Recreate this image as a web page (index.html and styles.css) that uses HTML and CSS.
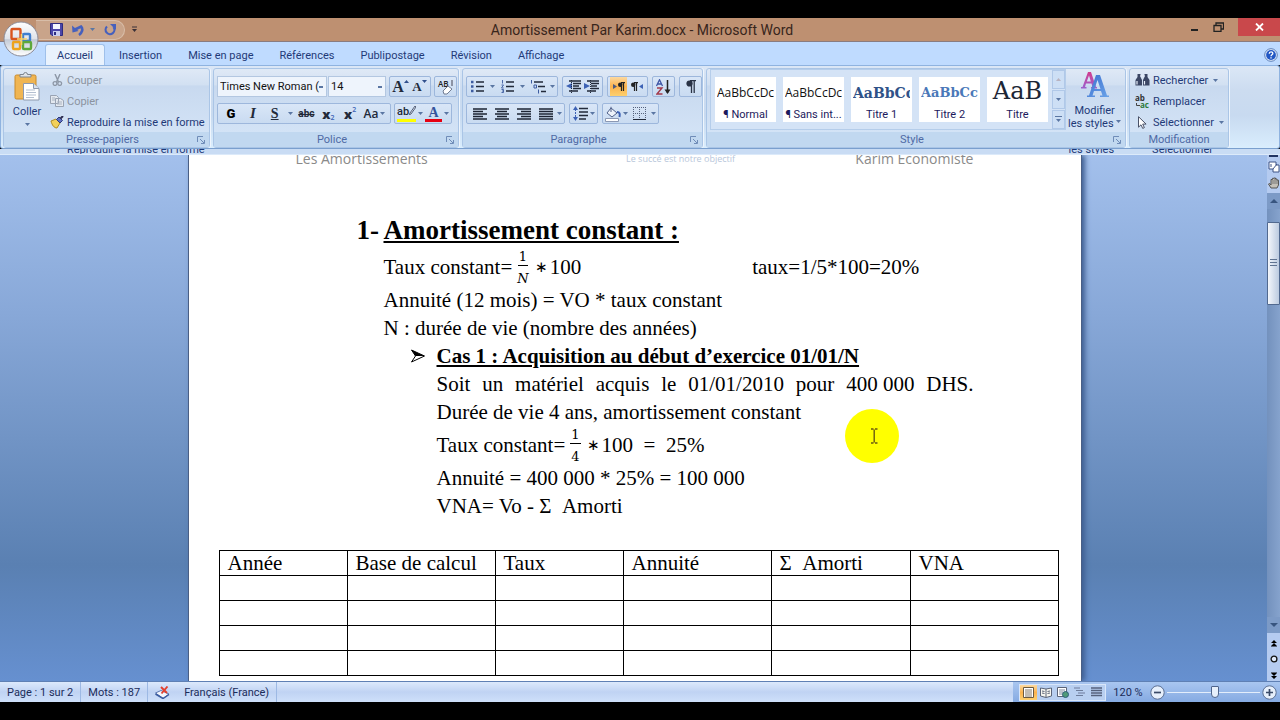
FILE: index.html
```html
<!DOCTYPE html>
<html lang="fr">
<head>
<meta charset="utf-8">
<meta name="viewport" content="width=device-width, initial-scale=1">
<title>Amortissement Par Karim.docx - Microsoft Word</title>
<link rel="stylesheet" href="styles.css">
</head>
<body>
<svg class="defs" aria-hidden="true">
  <defs>
    <linearGradient id="g-orb" x1="0" y1="0" x2="0" y2="1"><stop offset="0" stop-color="#fff"/><stop offset=".5" stop-color="#dfe3ea"/><stop offset=".52" stop-color="#c3cad6"/><stop offset="1" stop-color="#fff"/></linearGradient>
    <linearGradient id="g-pink" x1="0" y1="0" x2="0" y2="1"><stop offset="0" stop-color="#d23b8d"/><stop offset="1" stop-color="#9a62d0"/></linearGradient>
    <linearGradient id="g-blue" x1="0" y1="0" x2="1" y2="1"><stop offset="0" stop-color="#3c6fd0"/><stop offset="1" stop-color="#6aa3e8"/></linearGradient>
    <symbol id="caret" viewBox="0 0 5 3"><path d="M0 0h5L2.500 3z" fill="#5a76a3"/></symbol>
    <symbol id="launch" viewBox="0 0 8 8"><path d="M.5 6V.5H6M4 7.500H7.500V4M3 3l4 4" fill="none" stroke="#6f8cb8"/></symbol>
    <symbol id="lines-l" viewBox="0 0 14 12"><path d="M0 1h14M0 3.500h10M0 6h14M0 8.500h10M0 11h14" stroke="#1d2433" stroke-width="1.400"/></symbol>
    <symbol id="lines-c" viewBox="0 0 14 12"><path d="M0 1h14M2 3.500h10M0 6h14M2 8.500h10M0 11h14" stroke="#1d2433" stroke-width="1.400"/></symbol>
    <symbol id="lines-r" viewBox="0 0 14 12"><path d="M0 1h14M4 3.500h10M0 6h14M4 8.500h10M0 11h14" stroke="#1d2433" stroke-width="1.400"/></symbol>
    <symbol id="lines-j" viewBox="0 0 14 12"><path d="M0 1h14M0 3.500h14M0 6h14M0 8.500h14M0 11h14" stroke="#1d2433" stroke-width="1.400"/></symbol>
  </defs>
</svg>

<div class="app">
  <header class="titlebar">
    <div class="quick">
      <button class="plain" aria-label="Enregistrer"><svg width="13" height="13" viewBox="0 0 13 13"><path d="M.5.5h12v12H2L.5 11z" fill="#4b45a8" stroke="#2e2b80"/><path d="M3 1h7v5H3z" fill="#f3f6ff"/><path d="M3 8h7v5H3z" fill="#c9cdf0"/><path d="M4 9h2v3H4z" fill="#2e2b80"/></svg></button>
      <button class="plain undo" aria-label="Annuler"><svg width="12" height="12" viewBox="0 0 12 12"><path d="M3 5.500L9 2.500C11.500 5 10 9 7 11" fill="none" stroke="#4660bd" stroke-width="2.600"/><path d="M0 1.500L.5 8.500 6.500 7z" fill="#4660bd"/></svg><svg class="car" width="5" height="3"><use href="#caret"/></svg></button>
      <button class="plain" aria-label="Répéter"><svg width="12" height="12" viewBox="0 0 12 12"><path d="M3 2.500A4.400 4.400 0 1 0 9.500 3" fill="none" stroke="#4660bd" stroke-width="2.200"/><path d="M6 0h6v6z" fill="#4660bd"/></svg></button>
    </div>
    <button class="plain quick-more" aria-label="Personnaliser la barre d'outils Accès rapide"><svg width="7" height="7" viewBox="0 0 7 7"><path d="M1 1h5" stroke="#3a3038"/><path d="M1 3h5L3.500 6z" fill="#3a3038"/></svg></button>
    <h1 class="caption">Amortissement Par Karim.docx - Microsoft Word</h1>
    <div class="winbtns">
      <button class="plain" aria-label="Réduire"><svg width="9" height="9" viewBox="0 0 9 9"><path d="M1 7h7" stroke="#222" stroke-width="2"/></svg></button>
      <button class="plain" aria-label="Restaurer"><svg width="11" height="10" viewBox="0 0 11 10"><path d="M1 3.500h7v6H1zM3 3V1h7.500v6H8" fill="none" stroke="#222" stroke-width="1.300"/></svg></button>
      <button class="plain close" aria-label="Fermer"><svg width="9" height="8" viewBox="0 0 9 8"><path d="M1 .5l7 7M8 .5l-7 7" stroke="#fff" stroke-width="1.800"/></svg></button>
    </div>
    <button class="orb" aria-label="Bouton Office"><svg width="36" height="36" viewBox="0 0 36 36"><circle cx="18" cy="18" r="17" fill="url(#g-orb)" stroke="#8c8c98"/><g fill="none" stroke-width="2.400"><rect x="8.500" y="8" width="9" height="10" rx="1" stroke="#d9541e"/><rect x="20" y="13" width="7" height="7" rx="1" stroke="#3f7fd0"/><rect x="10" y="21" width="7" height="7" rx="1" stroke="#eda31b"/><rect x="20" y="21" width="8" height="7" rx="1" stroke="#5fa83a"/></g><path d="M14 18h10M18.500 13v11" stroke="#f7d36a" stroke-width="1.600"/></svg></button>
  </header>

  <nav class="tabs" aria-label="Ruban">
    <button class="tab on">Accueil</button><button class="tab">Insertion</button><button class="tab">Mise en page</button><button class="tab">Références</button><button class="tab">Publipostage</button><button class="tab">Révision</button><button class="tab">Affichage</button>
    <button class="plain help" aria-label="Aide"><svg width="14" height="14" viewBox="0 0 14 14"><circle cx="7" cy="7" r="6.300" fill="#e9f1fd" stroke="#5c7fb8"/><circle cx="7" cy="7" r="4.900" fill="#2257c4"/><path d="M5.200 5.800C5.200 3.300 9 3.400 8.800 5.600 8.700 6.800 7 6.900 7 8.200M7 9.200v1.300" fill="none" stroke="#fff" stroke-width="1.300"/></svg></button>
  </nav>

  <div class="ribbon">
    <section class="group g-clip">
      <div class="body clip">
        <button class="big paste"><svg width="26" height="29" viewBox="0 0 26 29"><rect x="1" y="3" width="21" height="24" rx="1.500" fill="#f0b552" stroke="#c98a2b"/><path d="M6 5V2.500h3.500a2 2 0 0 1 4 0H17V5z" fill="#dfe3e8" stroke="#7d8590"/><path d="M9.500 11.500h10l5.500 5v11.500H9.500z" fill="#fff" stroke="#8e99ad"/><path d="M19.500 11.500v5H25" fill="#d9e2ef" stroke="#8e99ad"/><path d="M12 18h9M12 20.500h10M12 23h10M12 25.500h8" stroke="#b4bfd0"/></svg><span>Coller</span><svg class="car" width="5" height="3"><use href="#caret"/></svg></button>
        <div class="stack">
          <button class="cmd off"><svg width="14" height="12" viewBox="0 0 14 12"><path d="M5 0l3.500 8M10 0L6.500 8" stroke="#8d97a6" stroke-width="1.400"/><circle cx="5" cy="9.500" r="1.900" fill="none" stroke="#8d97a6" stroke-width="1.300"/><circle cx="9.700" cy="9.500" r="1.900" fill="none" stroke="#8d97a6" stroke-width="1.300"/></svg>Couper</button>
          <button class="cmd off"><svg width="14" height="12" viewBox="0 0 14 12"><path d="M.5.5h6l2 2v6h-8zM5.500 3.500h5l3 2v6h-8z" fill="#e3e8ef" stroke="#99a3b3"/><path d="M7 7h5M7 9h5M2 3h3M2 5h3" stroke="#aab3c1"/></svg>Copier</button>
          <button class="cmd"><svg width="14" height="13" viewBox="0 0 14 13"><path d="M1 5l5-2 4 4-3 5C4 12 2 9 1 5z" fill="#f2d05a" stroke="#b08c22"/><path d="M6.500 3.500L9 1l3.500 3.500L10 7z" fill="#5e6fc0" stroke="#2d3a78"/><path d="M10.500 2.500L13 0" stroke="#2d2d50" stroke-width="2"/></svg>Reproduire la mise en forme</button>
        </div>
      </div>
      <footer><span>Presse-papiers</span><button class="plain" aria-label="Options Presse-papiers"><svg width="8" height="8"><use href="#launch"/></svg></button></footer>
    </section>

    <section class="group g-font">
      <div class="body rows">
        <div class="row">
          <div class="fields">
            <select class="field f-name" aria-label="Police"><option>Times New Roman (</option></select><select class="field f-size" aria-label="Taille de police"><option>14</option></select>
          </div>
          <div class="seg"><button class="tb serif big-a" aria-label="Agrandir la police">A<svg width="5" height="4" viewBox="0 0 5 4"><path d="M0 3L2.500 0 5 3z" fill="#31508c"/></svg></button><button class="tb serif small-a" aria-label="Réduire la police">A<svg width="5" height="4" viewBox="0 0 5 4"><path d="M0 0h5L2.500 3z" fill="#31508c"/></svg></button></div>
          <div class="seg"><button class="tb" aria-label="Effacer la mise en forme"><svg width="17" height="16" viewBox="0 0 17 16"><text x="1" y="8" font-size="8" font-weight="600" font-family="Open Sans, sans-serif" fill="#222">AB</text><path d="M6 12l5-5 4 3-5 5H7z" fill="#fff" stroke="#6f7b92"/><path d="M15 1v6" stroke="#445"/></svg></button></div>
        </div>
        <div class="row">
          <div class="seg grow">
            <button class="tb gras">G</button><button class="tb serif ital">I</button><button class="tb serif und">S</button><svg class="car" width="5" height="3"><use href="#caret"/></svg><button class="tb barre">abc</button><button class="tb ind">x<sub>2</sub></button><button class="tb ind">x<sup>2</sup></button><button class="tb casse">Aa<svg class="car" width="5" height="3"><use href="#caret"/></svg></button>
          </div>
          <div class="seg">
            <button class="tb color" aria-label="Surlignage"><span class="hl">ab</span><svg class="pen" width="7" height="9" viewBox="0 0 7 9"><path d="M6 0L1 7l-1 2 2-1 5-7z" fill="#dfe4ee" stroke="#55617a"/></svg></button><svg class="car" width="5" height="3"><use href="#caret"/></svg>
            <button class="tb color red" aria-label="Couleur de police"><span class="fc">A</span></button><svg class="car" width="5" height="3"><use href="#caret"/></svg>
          </div>
        </div>
      </div>
      <footer><span>Police</span><button class="plain" aria-label="Options Police"><svg width="8" height="8"><use href="#launch"/></svg></button></footer>
    </section>

    <section class="group g-para">
      <div class="body rows">
        <div class="row">
          <div class="seg wide">
            <button class="tb" aria-label="Puces"><svg width="13" height="13" viewBox="0 0 13 13"><path d="M5 2h8M5 6.500h8M5 11h8" stroke="#222a3a" stroke-width="1.300"/><path d="M0 .8h2.500v2.500H0zM0 5.300h2.500v2.500H0zM0 9.800h2.500v2.500H0z" fill="#3c5ba0"/></svg></button><svg class="car" width="5" height="3"><use href="#caret"/></svg>
            <button class="tb" aria-label="Numérotation"><svg width="13" height="13" viewBox="0 0 13 13"><path d="M5 2h8M5 6.500h8M5 11h8" stroke="#222a3a" stroke-width="1.300"/><path d="M1.500 0v3.500M.5 5h2L.5 8h2.200M.5 9.500h2v3H.5M1 11h1" fill="none" stroke="#3c5ba0" stroke-width=".9"/></svg></button><svg class="car" width="5" height="3"><use href="#caret"/></svg>
            <button class="tb" aria-label="Liste à plusieurs niveaux"><svg width="16" height="14" viewBox="0 0 16 14"><path d="M4 2h9M8 6.500h7M11 11.500h5" stroke="#222a3a" stroke-width="1.300"/><path d="M1.500 0v3.500M4 5h2.500v3H4zM8.500 9.500v4" fill="none" stroke="#3c5ba0"/></svg></button><svg class="car" width="5" height="3"><use href="#caret"/></svg>
          </div>
          <div class="seg">
            <button class="tb" aria-label="Diminuer le retrait"><svg width="15" height="13" viewBox="0 0 15 13"><path d="M3 1h12M7 3.500h8M7 6h6M7 8.500h8M3 11h9" stroke="#222a3a" stroke-width="1.500"/><path d="M6 3v6L0 6z" fill="#3d62b5"/><path d="M5.500 0v13" stroke="#222a3a" stroke-dasharray="1 1"/></svg></button>
            <button class="tb" aria-label="Augmenter le retrait"><svg width="15" height="13" viewBox="0 0 15 13"><path d="M3 1h12M7 3.500h8M7 6h6M7 8.500h8M3 11h9" stroke="#222a3a" stroke-width="1.500"/><path d="M0 3v6l6-3z" fill="#3d62b5"/><path d="M6.500 0v13" stroke="#222a3a" stroke-dasharray="1 1"/></svg></button>
          </div>
          <div class="seg">
            <button class="tb hot" aria-label="De gauche à droite"><svg width="12" height="9" viewBox="0 0 12 9"><path d="M0 2v5l4-2.500z" fill="#4d5b80"/><path d="M8 .7h4M8.500 1v8M10.500 1v8" stroke="#222" stroke-width="1.200"/><circle cx="7.200" cy="2.800" r="2.200" fill="#222"/></svg></button>
            <button class="tb" aria-label="De droite à gauche"><svg width="12" height="9" viewBox="0 0 12 9"><path d="M12 2v5L8 4.500z" fill="#3d62b5"/><path d="M3 .7h4M3.500 1v8M5.500 1v8" stroke="#222" stroke-width="1.200"/><circle cx="2.200" cy="2.800" r="2.200" fill="#222"/></svg></button>
          </div>
          <div class="seg"><button class="tb" aria-label="Trier"><svg width="15" height="16" viewBox="0 0 15 16"><path d="M.5 7L3.500.8 6.500 7M1.700 5h3.600" fill="none" stroke="#3d55a5" stroke-width="1.300"/><path d="M1 9h5L1 15h5.500" fill="none" stroke="#a33a4c" stroke-width="1.400"/><path d="M11.500 1v13" stroke="#222" stroke-width="1.500"/><path d="M8.500 10.500h6l-3 4.500z" fill="#222"/></svg></button></div>
          <div class="seg"><button class="tb" aria-label="Afficher tout"><svg width="10" height="13" viewBox="0 0 10 13"><path d="M4 .7h6M5.500 1v12M8.200 1v12" stroke="#2a3346" stroke-width="1.300"/><circle cx="3.500" cy="3.500" r="3.100" fill="#2a3346"/></svg></button></div>
        </div>
        <div class="row">
          <div class="seg">
            <button class="tb w22" aria-label="Aligner à gauche"><svg width="14" height="12"><use href="#lines-l"/></svg></button><button class="tb w22" aria-label="Centrer"><svg width="14" height="12"><use href="#lines-c"/></svg></button><button class="tb w22" aria-label="Aligner à droite"><svg width="14" height="12"><use href="#lines-r"/></svg></button><button class="tb w22" aria-label="Justifier"><svg width="14" height="12"><use href="#lines-j"/></svg></button><svg class="car" width="5" height="3"><use href="#caret"/></svg>
          </div>
          <div class="seg"><button class="tb" aria-label="Interligne"><svg width="15" height="15" viewBox="0 0 15 15"><path d="M6 2.500h9M6 6h9M6 9.500h9M6 13h7" stroke="#222a3a" stroke-width="1.300"/><path d="M2.500 0L5 4H0zM2.500 15L5 11H0z" fill="#3d62b5"/><path d="M2.500 3v9" stroke="#3d62b5" stroke-dasharray="2 1"/></svg></button><svg class="car" width="5" height="3"><use href="#caret"/></svg></div>
          <div class="seg">
            <button class="tb" aria-label="Trame de fond"><svg width="17" height="16" viewBox="0 0 17 16"><path d="M6 2l6 5-5 4-5-4z" fill="#eef3fb" stroke="#50608a"/><path d="M6 6V.8" stroke="#50608a"/><path d="M12 6c3 0 3 2 2.500 5" fill="none" stroke="#3d62b5" stroke-width="2"/><path d="M.5 12.500h13v3H.5z" fill="#fff" stroke="#8b98b3"/></svg></button><svg class="car" width="5" height="3"><use href="#caret"/></svg>
            <button class="tb w22" aria-label="Bordures"><svg width="13" height="13" viewBox="0 0 13 13"><path d="M.5 0v12M6.500 0v12M12.500 0v12M0 .5h13M0 6.500h13" stroke="#55617c" stroke-dasharray="1 1"/><path d="M0 12.500h13" stroke="#222a3a"/></svg></button><svg class="car" width="5" height="3"><use href="#caret"/></svg>
          </div>
        </div>
      </div>
      <footer><span>Paragraphe</span><button class="plain" aria-label="Options Paragraphe"><svg width="8" height="8"><use href="#launch"/></svg></button></footer>
    </section>

    <section class="group g-style">
      <div class="body styles">
        <div class="gallery">
          <button class="sty"><span class="smp">AaBbCcDc</span><span>¶ Normal</span></button>
          <button class="sty"><span class="smp">AaBbCcDc</span><span>¶ Sans int...</span></button>
          <button class="sty"><span class="smp t1">AaBbCc</span><span>Titre 1</span></button>
          <button class="sty"><span class="smp t2">AaBbCc</span><span>Titre 2</span></button>
          <button class="sty"><span class="smp t0">AaB</span><span>Titre</span></button>
          <div class="gscroll">
            <button aria-label="Ligne précédente"><svg width="5" height="3" viewBox="0 0 5 3"><path d="M0 3h5L2.500 0z" fill="#b9b3c0"/></svg></button>
            <button aria-label="Ligne suivante"><svg width="5" height="3"><use href="#caret"/></svg></button>
            <button aria-label="Autres"><svg width="7" height="7" viewBox="0 0 7 7"><path d="M0 .5h7" stroke="#5a76a3"/><path d="M1 3h5L3.500 6z" fill="#5a76a3"/></svg></button>
          </div>
        </div>
        <button class="big modif"><svg width="28" height="27" viewBox="0 0 28 27"><path d="M7 1h3l5 15h1v1.500h-6V16h1.500l-1-3.500H5L4 16h1.500v1.500H0V16h1.500zM8 4.500L5.800 10.500h4z" fill="url(#g-pink)"/><path d="M15 4h4l7 20.500h2V26h-9v-1.500h2.500L20 20h-7l-1.500 4.500H14V26H6v-1.500h2zM16.500 9l-3 9h6z" fill="url(#g-blue)"/></svg><span>Modifier</span><span>les styles <svg class="car" width="5" height="3"><use href="#caret"/></svg></span></button>
      </div>
      <footer><span>Style</span><button class="plain" aria-label="Options Style"><svg width="8" height="8"><use href="#launch"/></svg></button></footer>
    </section>

    <section class="group g-edit">
      <div class="body">
        <div class="stack">
          <button class="cmd"><svg width="15" height="12" viewBox="0 0 15 12"><path d="M2.500 0h3v3L7 6v5.500H.5V6l2-3zM9.500 0h3v3l2 3v5.500H8V6l1.500-3z" fill="#3b4664"/><path d="M2 7v3.500M9.500 7v3.500M5 2h5" stroke="#e8eefa" stroke-width="1.200"/></svg>Rechercher<svg class="car" width="5" height="3"><use href="#caret"/></svg></button>
          <button class="cmd"><svg width="15" height="15" viewBox="0 0 15 15"><text x="0" y="7" font-size="8" font-weight="700" font-family="Open Sans, sans-serif" fill="#333">ab</text><text x="5" y="14" font-size="8" font-weight="700" font-family="Open Sans, sans-serif" fill="#2d7a3c">ac</text><path d="M1.500 9v2.500H5" fill="none" stroke="#444"/></svg>Remplacer</button>
          <button class="cmd"><svg width="15" height="13" viewBox="0 0 15 13"><path d="M3.500.7v10.500l2.500-2.400 1.700 3.600 1.700-.8-1.700-3.500h3.400z" fill="#fff" stroke="#4a5268"/></svg>Sélectionner<svg class="car" width="5" height="3"><use href="#caret"/></svg></button>
        </div>
      </div>
      <footer><span>Modification</span></footer>
    </section>
  </div>

  <div class="echo" aria-hidden="true"><span class="e1">Reproduire la mise en forme</span><span class="e2">les styles</span><span class="e3">Sélectionner</span></div>

  <div class="work">
    <main class="desk">
      <article class="page">
        <div class="runhead"><span>Les Amortissements</span><small>Le succé est notre objectif</small><span>Karim Economiste</span></div>
        <div class="text">
          <h2><span class="num">1-</span><u>Amortissement constant :</u></h2>
          <p class="math"><span>Taux constant=</span><span class="frac"><span>1</span><i>N</i></span><span class="op">∗</span><span>100</span><span class="aside">taux=1/5*100=20%</span></p>
          <p>Annuité (12 mois) = VO * taux constant</p>
          <p>N : durée de vie (nombre des années)</p>
          <div class="case">
            <h3><svg width="14" height="14" viewBox="0 0 14 14"><path d="M.5 1L13.500 7 .5 13 4.500 7z" fill="#fff" stroke="#000"/><path d="M.5 1L13.500 7H4.500z"/></svg><u>Cas 1 : Acquisition au début d’exercice 01/01/N</u></h3>
            <p class="just">Soit un matériel acquis le 01/01/2010 pour <span class="amount">400 000</span> DHS.</p>
            <p>Durée de vie 4 ans, amortissement constant</p>
            <p class="math"><span>Taux constant=</span><span class="frac"><span>1</span><span>4</span></span><span class="op">∗</span><span>100 &nbsp;=&ensp;25%</span></p>
            <p>Annuité = 400 000 * 25% = 100 000</p>
            <p>VNA= Vo - Σ &nbsp;Amorti</p>
          </div>
        </div>
        <table class="plan">
          <colgroup><col class="c1"><col class="c2"><col class="c1"><col class="c2"><col class="c3"><col class="c2"></colgroup>
          <thead><tr><th>Année</th><th>Base de calcul</th><th>Taux</th><th>Annuité</th><th>Σ &nbsp;Amorti</th><th>VNA</th></tr></thead>
          <tbody>
            <tr><td></td><td></td><td></td><td></td><td></td><td></td></tr>
            <tr><td></td><td></td><td></td><td></td><td></td><td></td></tr>
            <tr><td></td><td></td><td></td><td></td><td></td><td></td></tr>
            <tr><td></td><td></td><td></td><td></td><td></td><td></td></tr>
          </tbody>
        </table>
        <svg class="pointer" width="54" height="54" viewBox="0 0 54 54" aria-hidden="true"><circle cx="27" cy="27" r="27" fill="#ff0"/><path d="M26 20h2.500M30 20h2.500M26 34h2.500M30 34h2.500M29.200 20.500v13" stroke="#6a5a10" stroke-width="1.400"/></svg>
      </article>
    </main>
    <aside class="scroll">
      <svg class="split" width="9" height="2"><path d="M0 1h9" stroke="#223563" stroke-width="2"/></svg>
      <button class="plain" aria-label="Règle"><svg width="12" height="12" viewBox="0 0 12 12"><path d="M1 1h7v3h3v7H5V8H1z" fill="#fff" stroke="#3f5486"/><path d="M5 8l4-5M3 3v3" stroke="#3f5486"/></svg></button>
      <button class="plain" aria-label="Main"><svg width="12" height="12" viewBox="0 0 12 12"><path d="M3 11L.5 7l1.200-.6L3 8V2.500h1.500V1.300H6V1h1.500v1H9v1.200h1.500V8L9 11z" fill="#c4c0b8" stroke="#555"/><path d="M5 3v4M7 2v5M9 3v4" stroke="#777"/></svg></button>
      <button class="arrow up" aria-label="Défiler vers le haut"><svg width="8" height="4" viewBox="0 0 8 4"><path d="M0 4h8L4 0z" fill="#38557f"/></svg></button>
      <div class="track"><div class="thumb"></div></div>
      <button class="arrow down" aria-label="Défiler vers le bas"><svg width="8" height="4" viewBox="0 0 8 4"><path d="M0 0h8L4 4z" fill="#38557f"/></svg></button>
      <button class="plain nav" aria-label="Page précédente"><svg width="6" height="7" viewBox="0 0 6 7"><path d="M0 3h6L3 0zM0 6h6L3 3zM0 6h6v.6H0z"/></svg></button>
      <button class="plain nav" aria-label="Sélectionner l'objet parcouru"><svg width="8" height="8" viewBox="0 0 8 8"><circle cx="4" cy="4" r="2.900" fill="#dfe9fa" stroke="#111" stroke-width="1.300"/></svg></button>
      <button class="plain nav" aria-label="Page suivante"><svg width="6" height="7" viewBox="0 0 6 7"><path d="M0 1h6L3 4zM0 4h6L3 7zM0 .4h6V1H0z"/></svg></button>
    </aside>
  </div>

  <footer class="status">
    <button class="plain st">Page : 1 sur 2</button>
    <button class="plain st">Mots : 187</button>
    <button class="plain st icon" aria-label="Vérification"><svg width="15" height="13" viewBox="0 0 15 13"><path d="M.5 7L6 4.500 14 8l-6 4.500z" fill="#f4f6fc" stroke="#5b77b0"/><path d="M.5 8l7.500 4.500 6-4" fill="none" stroke="#3a5ba0" stroke-width="1.500"/><path d="M6 1l6 6M12.500.5L6.500 7.500" stroke="#e2402e" stroke-width="1.900"/></svg></button>
    <button class="plain st">Français (France)</button>
    <div class="zoombar">
      <div class="views">
        <button class="hot" aria-label="Page"><svg width="11" height="11" viewBox="0 0 11 11"><path d="M.5.5h10v10H.5z" fill="#fff" stroke="#6a5a40"/><path d="M2 3h7M2 5h7M2 7h7M2 9h7" stroke="#857a68"/></svg></button>
        <button aria-label="Lecture plein écran"><svg width="12" height="11" viewBox="0 0 12 11"><path d="M.5 1L6 2l5.500-1v8L6 10.500.5 9z" fill="#f6f6f0" stroke="#5b6478"/><path d="M6 2v8M2 4l2.500.5M2 6l2.500.5M7.500 4.500L10 4M7.500 6.500L10 6" stroke="#5b6478"/></svg></button>
        <button aria-label="Web"><svg width="12" height="11" viewBox="0 0 12 11"><path d="M.5.5h9v9h-9z" fill="#fff" stroke="#5b6478"/><path d="M2 3h6M2 5h4M2 7h3" stroke="#7d879b"/><circle cx="8.500" cy="7.500" r="3" fill="#4f9a78" stroke="#2d5c78"/></svg></button>
        <button aria-label="Plan"><svg width="11" height="10" viewBox="0 0 11 10"><path d="M0 1h6M2 3.500h7M4 6h7M2 8.500h7" stroke="#6e7d9b" stroke-width="1.200"/></svg></button>
        <button aria-label="Brouillon"><svg width="11" height="10" viewBox="0 0 11 10"><path d="M0 1h11M0 3.500h11M0 6h11M0 8.500h11" stroke="#56627c" stroke-width="1.300"/></svg></button>
      </div>
      <button class="plain pct">120 %</button>
      <button class="plain" aria-label="Zoom arrière"><svg width="15" height="15" viewBox="0 0 15 15"><circle cx="7.500" cy="7.500" r="6.700" fill="#e6effb" stroke="#5b6f93"/><path d="M4 7.500h7" stroke="#3a4a68" stroke-width="1.700"/></svg></button>
      <input class="range" type="range" min="10" max="210" value="114" aria-label="Zoom">
      <button class="plain" aria-label="Zoom avant"><svg width="15" height="15" viewBox="0 0 15 15"><circle cx="7.500" cy="7.500" r="6.700" fill="#e6effb" stroke="#5b6f93"/><path d="M4 7.500h7M7.500 4v7" stroke="#3a4a68" stroke-width="1.700"/></svg></button>
    </div>
  </footer>
</div>
</body>
</html>
```
FILE: styles.css
```css
* { box-sizing: border-box; }
body { margin: 0; background: #000; font-family: Roboto, "Open Sans", sans-serif; font-size: 11px; color: #1f3a78; }
button { font: inherit; color: inherit; border: 0; background: none; padding: 0; display: flex; align-items: center; justify-content: center; white-space: nowrap; }
svg { display: block; flex: none; }
.defs { position: absolute; width: 0; height: 0; }
.app { display: flex; flex-direction: column; height: 100vh; padding: 18px 0; }

.titlebar { position: relative; z-index: 2; height: 24px; flex: none; display: grid; grid-template-columns: 125px 1fr auto 1fr 121px; align-items: center; background: #be9071; border-bottom: 1px solid #8a7c80; }
.quick { display: flex; align-items: center; gap: 9px; height: 20px; margin-left: 36px; padding: 0 12px 0 14px; border: 1px solid #d8bda8; border-left: 0; border-radius: 0 10px 10px 0; background: #c9a48a; }
.undo { gap: 6px; }
.quick-more { justify-self: start; margin-left: 6px; }
.caption { margin: 0; font-size: 14px; font-weight: 400; line-height: 18px; color: #38251c; white-space: nowrap; }
.winbtns { grid-column: 4 / 6; display: flex; justify-content: flex-end; align-self: start; gap: 14px; height: 18px; }
.close { width: 42px; background: #c9484b; }
.orb { position: absolute; left: 3px; top: 3px; }

.tabs { display: flex; flex: none; align-items: stretch; gap: 2px; height: 23px; padding: 2px 2px 0 45px; background: #bfdbff; }
.tab { padding: 0 11px; border: 1px solid transparent; border-bottom: 0; }
.tab.on { background: #e9f2fd; border-color: #9fc0ea; border-radius: 3px 3px 0 0; }
.help { margin-left: auto; }

.ribbon { display: flex; flex: none; gap: 3px; height: 84px; padding: 2px 2px 0; overflow: hidden; background: linear-gradient(#dbe7f6, #ccdcf0 30%, #c8daf0 60%, #d9edfd); border: 1px solid #8fb3e0; border-bottom-color: #7a9fce; border-radius: 3px; }
.group { flex: none; display: flex; flex-direction: column; border: 1px solid #aac5e6; border-radius: 3px; background: linear-gradient(#dfe9f6, #d2e0f2 20%, #c8d9ef 22%, #d6e6f8); box-shadow: 1px 0 #eef5fd; }
.g-clip { width: 207px; }
.g-font { width: 246px; }
.g-para { width: 241px; }
.g-style { width: 420px; }
.g-edit { width: 100px; }
.group .body { flex: 1; display: flex; min-height: 0; }
.group footer { display: flex; flex: none; align-items: center; height: 15px; padding: 0 4px; background: #c1d8f0; color: #4f6aa5; }
.group footer span { flex: 1; text-align: center; line-height: 14px; }
.clip { gap: 3px; padding-left: 5px; }
.big { flex-direction: column; justify-content: flex-start; line-height: 13px; }
.paste { width: 36px; padding-top: 3px; gap: 4px; }
.paste span { line-height: 14px; }
.stack { display: flex; flex-direction: column; justify-content: space-between; padding: 2px 2px 1px; }
.g-edit .stack { padding-left: 5px; }
.cmd { justify-content: flex-start; height: 18px; gap: 3px; }
.cmd .car { margin-left: 2px; }
.off { color: #8b93a0; }

.rows { flex-direction: column; gap: 6px; padding: 7px 0 0 3px; }
.row { display: flex; gap: 3px; height: 21px; }
.g-para .row { gap: 4px; }
.g-para .seg { gap: 1px; }
.g-para .seg.wide { gap: 0; width: 92px; padding: 0; }
.fields { display: flex; gap: 1px; }
.field { appearance: none; border: 1px solid #b3c7e1; border-radius: 0; background: #eef4fc linear-gradient(#5a76a3, #5a76a3) no-repeat right 3px center / 4px 2px; color: #111; font: inherit; padding: 0 2px; }
.f-name { width: 110px; }
.f-size { width: 58px; }
.seg { display: flex; align-items: center; justify-content: space-around; gap: 2px; padding: 0 2px; border: 1px solid #9db7dc; border-radius: 2px; background: linear-gradient(#d9e6f7, #c9dbf1); }
.seg.grow { width: 174px; gap: 0; }
.tb { height: 19px; min-width: 17px; color: #222a3a; }
.serif { font-family: "Liberation Serif", serif; font-weight: 700; }
.big-a { font-size: 16px; align-items: center; }
.small-a { font-size: 13px; }
.big-a svg, .small-a svg { align-self: flex-start; margin-top: 3px; }
.gras { font-weight: 900; font-size: 13px; color: #000; }
.ital { font-style: italic; font-size: 15px; }
.und { font-size: 14px; text-decoration: underline; }
.barre { font-weight: 700; font-size: 10px; text-decoration: line-through; }
.ind { font-family: "Open Sans", sans-serif; font-weight: 800; font-size: 13px; }
.ind sub, .ind sup { font-size: 7px; font-weight: 600; color: #3d62b5; line-height: 7px; }
.ind sub { align-self: flex-end; margin-bottom: 2px; }
.ind sup { align-self: flex-start; margin-top: 2px; }
.casse { font-family: "Open Sans", sans-serif; font-weight: 600; font-size: 12px; gap: 2px; }
.color { align-items: flex-start; border-bottom: 3px solid #ff0; height: 16px; }
.color.red { border-color: #e60012; }
.hl { font-size: 11px; font-weight: 500; line-height: 12px; }
.fc { font: 700 14px/13px "Liberation Serif", serif; color: #35549c; }
.w22 { width: 21px; }
.hot { background: linear-gradient(#fcd9a0, #fbb24c 50%, #fdd070); }

.styles { justify-content: space-between; padding: 0 7px 2px 3px; gap: 2px; }
.gallery { display: flex; flex: 1; align-items: center; gap: 7px; padding-left: 4px; border: 1px solid #b5cdea; background: #d4e3f6; }
.sty { width: 61px; height: 45px; flex: none; flex-direction: column; justify-content: flex-end; overflow: hidden; background: #fff; color: #1c1a5c; line-height: 15px; padding: 0 2px; }
.smp { width: 100%; height: 28px; overflow: hidden; font: 12px/28px "Open Sans", sans-serif; color: #111; text-align: left; }
.t1, .t2 { font-family: "DejaVu Serif", serif; font-weight: 700; font-size: 14px; color: #2f5288; }
.t2 { font-size: 13px; color: #4a78b8; }
.t0 { font-family: "DejaVu Serif", serif; font-size: 24px; line-height: 24px; color: #1c2636; text-align: center; }
.gscroll { display: flex; flex-direction: column; align-self: stretch; width: 13px; margin-left: -3px; gap: 1px; }
.gscroll button { flex: 1; background: #cddff5; border: 1px solid #b0c8e8; }
.modif { width: 54px; padding-top: 2px; }
.modif svg:first-child { margin-bottom: 6px; }
.modif .car { display: inline-block; vertical-align: middle; }

.echo { flex: none; display: flex; height: 6px; overflow: hidden; background: #c9dcf4; border-bottom: 1px solid #dceafa; line-height: 2px; }
.e1 { margin-left: 67px; }
.e2 { margin-left: auto; }
.e3 { margin: 0 67px 0 38px; }

.work { flex: 1; display: flex; min-height: 0; }
.desk { flex: 1; min-width: 0; padding-left: 2px; overflow: hidden; background: linear-gradient(#a3c0ec, #88a8d8 30%, #5a80b2 78%, #6690d0); }
.page { position: relative; width: 894px; min-height: 100%; margin: 0 auto; background: #fff; border: 1px solid #4a5f85; border-width: 0 1px; box-shadow: 3px 0 5px #3f5f92; color: #000; }
.runhead { display: flex; justify-content: space-between; height: 20px; padding: 0 107px; font: 14px/8px "Open Sans", sans-serif; color: #8a8a8a; overflow: hidden; }
.runhead small { margin-left: 78px; font-size: 9px; color: #b7c6da; }
.text { padding: 37px 107px 0 195px; font: 21px/28px "Liberation Serif", serif; }
.text h2, .text h3, .text p { margin: 0; font-size: 21px; }
.text h2 { display: flex; margin-left: -27px; font-size: 27px; line-height: 36px; }
.num { width: 27px; white-space: nowrap; }
.math { display: flex; align-items: center; gap: 6px; height: 38px; }
.op { width: 9px; font-size: 15px; }
.aside { margin-left: 165px; }
.frac { display: grid; justify-items: center; margin-left: -1px; font: 13px/17px "DejaVu Serif", serif; }
.frac > :first-child { border-bottom: 1px solid #000; padding: 0 1px; }
.frac > :last-child { padding-top: 4px; }
.case { padding-left: 53px; }
.text h3 { display: flex; align-items: center; gap: 12px; margin-left: -26px; }
.text .just { text-align: justify; text-align-last: justify; }
.amount { display: inline-block; text-align-last: left; }
.plan { width: 840px; margin: 30px 0 6px 30px; border-collapse: collapse; table-layout: fixed; font: 21px/24px "Liberation Serif", serif; }
.plan th, .plan td { height: 25px; border: 1px solid #000; padding: 0 8px; font-weight: 400; text-align: left; }
.c1 { width: 128px; }
.c2 { width: 148px; }
.c3 { width: 139px; }
.pointer { position: absolute; left: 656px; top: 254px; }

.scroll { width: 13px; flex: none; display: flex; flex-direction: column; align-items: center; gap: 4px; background: #b5cbf0; }
.arrow { width: 100%; height: 16px; background: #7c9ac6; }
.track { flex: 1; width: 100%; margin: -4px 0; padding-top: 13px; background: linear-gradient(90deg, #7391bd, #86a3cd); }
.thumb { height: 83px; border: 1px solid #51698f; border-radius: 1px; background: repeating-linear-gradient(#5f7391 0 1px, transparent 1px 3px) center / 7px 9px no-repeat, linear-gradient(90deg, #f3f6fb, #bccbe0); }
.nav { height: 12px; }

.status { display: flex; flex: none; align-items: stretch; height: 21px; border-top: 1px solid #5f80b4; background: linear-gradient(#dce9fc, #c0d3f3 50%, #cfe0fa); }
.st { padding: 0 7px; border-right: 1px solid #9db9e4; color: #1b2c5a; }
.st.icon { border-right: 0; }
.zoombar { display: flex; align-items: center; margin-left: auto; padding: 0 3px 0 6px; gap: 2px; background: linear-gradient(#a9c6f0, #85aae2); }
.views { display: flex; border: 1px solid #d8e6fa; background: #b8cff0; }
.views button { width: 17px; height: 15px; }
.pct { width: 40px; color: #1b2c5a; }
.range { appearance: none; width: 93px; height: 15px; margin: 0; background: linear-gradient(#e3edfb, #e3edfb) center / 100% 1px no-repeat; }
.range::-webkit-slider-thumb { appearance: none; width: 8px; height: 12px; border: 1px solid #4e648c; border-radius: 1px 1px 4px 4px; background: #e6effb; }
```
